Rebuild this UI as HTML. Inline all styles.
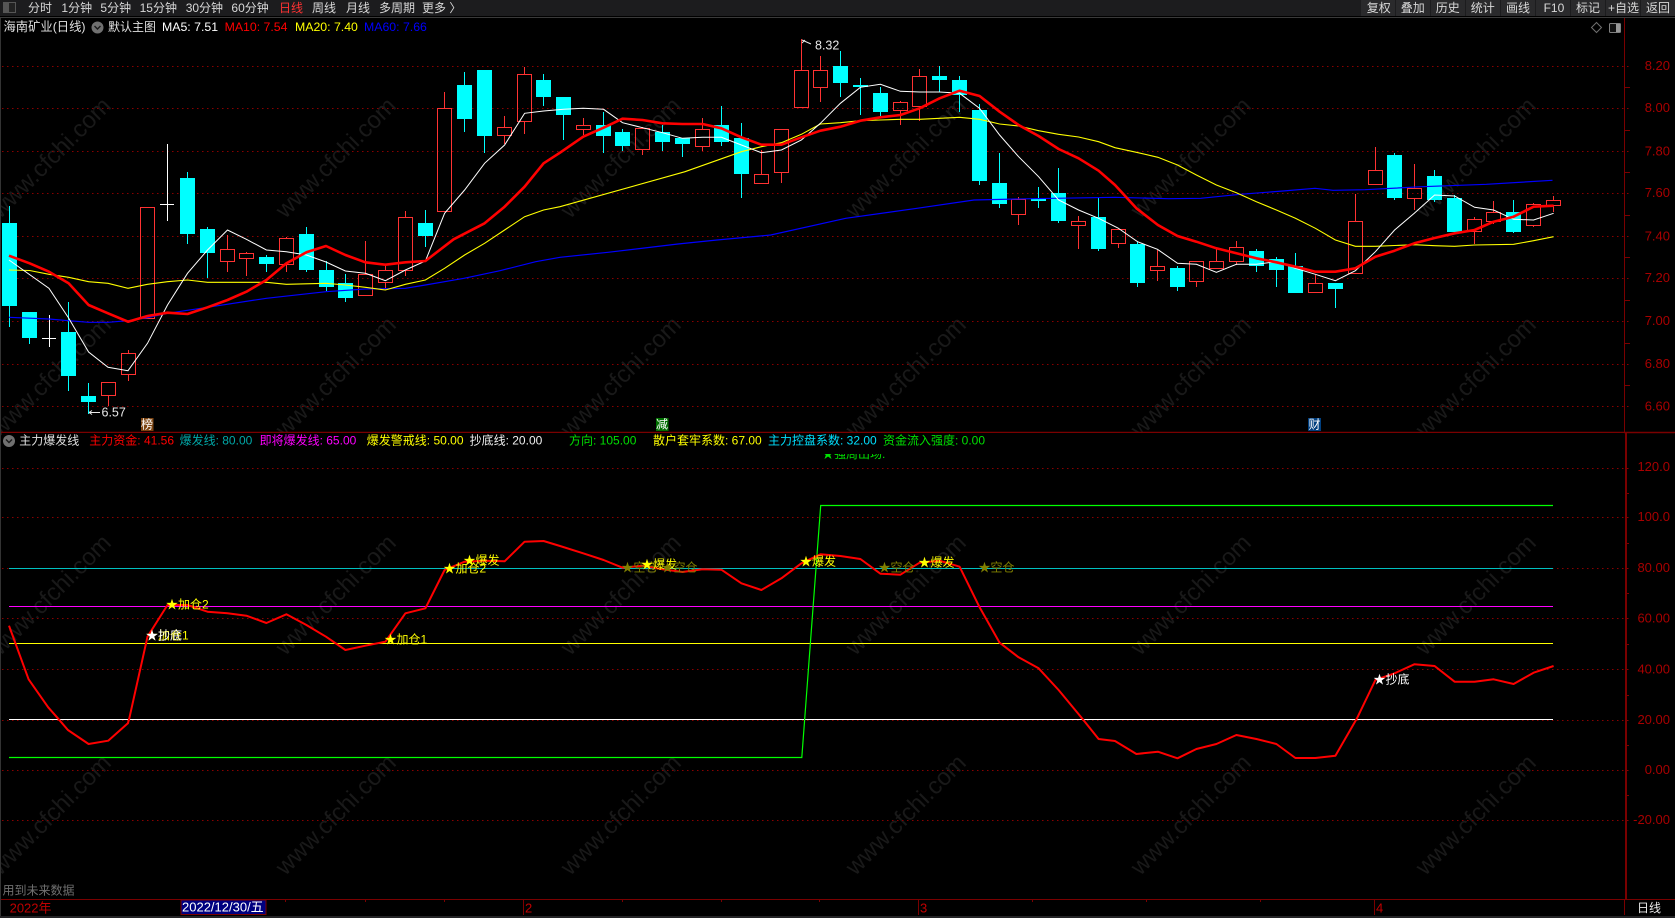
<!DOCTYPE html>
<html><head><meta charset="utf-8"><style>
html,body{margin:0;padding:0;background:#000;width:1675px;height:918px;overflow:hidden}
svg{display:block;position:absolute;left:0;top:0}
text{font-family:"Liberation Sans","Noto Sans CJK SC",sans-serif;font-size:12px;dominant-baseline:central}
.ax{fill:#a80000;text-anchor:end;font-size:13px}
.m{font-size:12px}
.y{fill:#ff0}.o{fill:#808000}.w{fill:#fff}
.b{fill:#d8d8d8;font-size:12px}
.wm{font-size:24px}
</style></head><body>
<svg width="1675" height="918" viewBox="0 0 1675 918" xmlns="http://www.w3.org/2000/svg">
<rect width="1675" height="918" fill="#000"/>
<!-- watermark -->
<g fill="#191919" text-anchor="middle">
<text class="wm" transform="translate(51,158) rotate(-45)">www.cfchi.com</text><text class="wm" transform="translate(336,158) rotate(-45)">www.cfchi.com</text><text class="wm" transform="translate(621,158) rotate(-45)">www.cfchi.com</text><text class="wm" transform="translate(906,158) rotate(-45)">www.cfchi.com</text><text class="wm" transform="translate(1191,158) rotate(-45)">www.cfchi.com</text><text class="wm" transform="translate(1476,158) rotate(-45)">www.cfchi.com</text>
<text class="wm" transform="translate(51,377) rotate(-45)">www.cfchi.com</text><text class="wm" transform="translate(336,377) rotate(-45)">www.cfchi.com</text><text class="wm" transform="translate(621,377) rotate(-45)">www.cfchi.com</text><text class="wm" transform="translate(906,377) rotate(-45)">www.cfchi.com</text><text class="wm" transform="translate(1191,377) rotate(-45)">www.cfchi.com</text><text class="wm" transform="translate(1476,377) rotate(-45)">www.cfchi.com</text>
<text class="wm" transform="translate(51,595) rotate(-45)">www.cfchi.com</text><text class="wm" transform="translate(336,595) rotate(-45)">www.cfchi.com</text><text class="wm" transform="translate(621,595) rotate(-45)">www.cfchi.com</text><text class="wm" transform="translate(906,595) rotate(-45)">www.cfchi.com</text><text class="wm" transform="translate(1191,595) rotate(-45)">www.cfchi.com</text><text class="wm" transform="translate(1476,595) rotate(-45)">www.cfchi.com</text>
<text class="wm" transform="translate(51,815) rotate(-45)">www.cfchi.com</text><text class="wm" transform="translate(336,815) rotate(-45)">www.cfchi.com</text><text class="wm" transform="translate(621,815) rotate(-45)">www.cfchi.com</text><text class="wm" transform="translate(906,815) rotate(-45)">www.cfchi.com</text><text class="wm" transform="translate(1191,815) rotate(-45)">www.cfchi.com</text><text class="wm" transform="translate(1476,815) rotate(-45)">www.cfchi.com</text>
</g>
<!-- grid -->
<path d="M2 66.5H1630M2 108.5H1630M2 151.5H1630M2 193.5H1630M2 236.5H1630M2 278.5H1630M2 321.5H1630M2 364.5H1630M2 406.5H1630M2 468.5H1630M2 517.5H1630M2 568.5H1630M2 618.5H1630M2 669.5H1630M2 720.5H1630M2 770.5H1630M2 820.5H1630" stroke="#8a0000" stroke-width="1" stroke-dasharray="1.5 3.5" fill="none" shape-rendering="crispEdges"/>
<!-- axis -->
<path d="M1624.5 18V432M1625 87.5h5M1625 130.5h5M1625 172.5h5M1625 215.5h5M1625 257.5h5M1625 300.5h5M1625 343.5h5M1625 385.5h5M1625 493.5h4M1625 543.5h4M1625 593.5h4M1625 644.5h4M1625 695.5h4M1625 745.5h4M1625 795.5h4" stroke="#7a0000" fill="none" shape-rendering="crispEdges"/>
<path d="M1626 432V899" stroke="#7a0000" stroke-width="2" fill="none" shape-rendering="crispEdges"/>
<path d="M0 432.5H1675" stroke="#7a0000" stroke-width="1.5" fill="none"/>
<path d="M0 899.5H1675" stroke="#7a0000" fill="none" shape-rendering="crispEdges"/>
<path d="M1624.5 899V915M523.5 899V915M918.5 899V915M1374.5 899V915M285.5 899v3M365.5 899v3M444.5 899v3M622.5 899v3M721.5 899v3M819.5 899v3M1032.5 899v3M1146.5 899v3M1260.5 899v3" stroke="#7a0000" fill="none" shape-rendering="crispEdges"/>
<!-- cyan wicks -->
<path shape-rendering="crispEdges" fill="none" stroke="#0ff" d="M9.5 206V327M29.5 312V344M68.5 302V391M88.5 383V414M187.5 172V244M207.5 227V278M266.5 255V272M306.5 227V272M326.5 261V291M345.5 274V302M425.5 210V247M464.5 72V132M484.5 70V153M543.5 74V106M563.5 97V140M603.5 112V153M622.5 129V151M662.5 125V151M682.5 138V157M721.5 106V146M741.5 123V198M840.5 51V97M860.5 78V115M880.5 87V116M939.5 66V92M959.5 76V112M979.5 104V185M999.5 153V208M1038.5 187V208M1058.5 168V223M1098.5 198V251M1137.5 242V287M1177.5 266V291M1256.5 249V272M1276.5 257V287M1295.5 253V293M1335.5 283V308M1394.5 153V200M1434.5 170V202M1454.5 195V233M1513.5 200V233"/>
<!-- cyan bodies -->
<path shape-rendering="crispEdges" fill="#0ff" d="M2 223h15v83h-15zM22 312h15v26h-15zM61 332h15v44h-15zM81 396h15v6h-15zM180 178h15v56h-15zM200 229h15v24h-15zM259 257h15v7h-15zM299 234h15v36h-15zM319 270h15v17h-15zM338 283h15v15h-15zM418 223h15v13h-15zM457 85h15v34h-15zM477 70h15v66h-15zM536 80h15v17h-15zM556 97h15v18h-15zM596 125h15v11h-15zM615 132h15v14h-15zM655 132h15v10h-15zM675 138h15v6h-15zM714 125h15v17h-15zM734 138h15v36h-15zM833 66h15v17h-15zM853 85h15v2h-15zM873 93h15v19h-15zM932 76h15v4h-15zM952 80h15v15h-15zM972 110h15v71h-15zM992 183h15v21h-15zM1031 199h15v2h-15zM1051 193h15v28h-15zM1091 217h15v32h-15zM1130 244h15v39h-15zM1170 268h15v19h-15zM1249 251h15v15h-15zM1269 259h15v11h-15zM1288 266h15v27h-15zM1328 283h15v6h-15zM1387 155h15v43h-15zM1427 176h15v24h-15zM1447 198h15v34h-15zM1506 212h15v20h-15z"/>
<!-- red candles -->
<path shape-rendering="crispEdges" fill="none" stroke="#ff3232" d="M101.5 382.5h14v13h-14zM108.5 396V406M121.5 353.5h14v21h-14zM128.5 350V353M128.5 375V381M140.5 207.5h14v111h-14zM220.5 249.5h14v12h-14zM227.5 235V249M227.5 262V272M239.5 253.5h14v5h-14zM246.5 252V253M246.5 259V276M279.5 238.5h14v26h-14zM286.5 237V238M286.5 265V272M358.5 274.5h14v21h-14zM365.5 241V274M378.5 270.5h14v12h-14zM385.5 265V270M385.5 283V290M398.5 217.5h14v53h-14zM405.5 211V217M405.5 271V276M437.5 108.5h14v103h-14zM444.5 92V108M497.5 127.5h14v8h-14zM504.5 116V127M504.5 136V144M517.5 74.5h14v47h-14zM524.5 67V74M524.5 122V134M576.5 125.5h14v4h-14zM583.5 118V125M583.5 130V135M635.5 128.5h14v21h-14zM642.5 127V128M642.5 150V155M695.5 129.5h14v17h-14zM702.5 118V129M702.5 147V151M754.5 174.5h14v9h-14zM761.5 150V174M774.5 129.5h14v43h-14zM781.5 173V183M794.5 70.5h14v37h-14zM801.5 39V70M813.5 70.5h14v17h-14zM820.5 56V70M820.5 88V102M893.5 102.5h14v8h-14zM900.5 101V102M900.5 111V125M912.5 76.5h14v30h-14zM919.5 69V76M919.5 107V121M1011.5 199.5h14v15h-14zM1018.5 197V199M1018.5 215V225M1071.5 221.5h14v4h-14zM1078.5 216V221M1078.5 226V249M1111.5 229.5h14v14h-14zM1118.5 244V248M1150.5 266.5h14v4h-14zM1157.5 250V266M1157.5 271V281M1189.5 261.5h14v20h-14zM1196.5 282V287M1209.5 261.5h14v7h-14zM1216.5 249V261M1229.5 247.5h14v14h-14zM1236.5 241V247M1236.5 262V265M1308.5 283.5h14v9h-14zM1315.5 275V283M1348.5 221.5h14v52h-14zM1355.5 194V221M1368.5 170.5h14v14h-14zM1375.5 147V170M1407.5 188.5h14v10h-14zM1414.5 164V188M1414.5 199V210M1467.5 219.5h14v12h-14zM1474.5 217V219M1474.5 232V244M1486.5 212.5h14v9h-14zM1493.5 201V212M1493.5 222V224M1526.5 204.5h14v21h-14zM1533.5 203V204M1533.5 226V227M1546.5 200.5h14v5h-14zM1553.5 196V200M1553.5 206V212"/>
<!-- white dojis -->
<path shape-rendering="crispEdges" fill="none" stroke="#fff" d="M49.5 315V347M42 338.5H56M167.5 144V221M160 204.5H174"/>
<!-- MA60 -->
<polyline fill="none" stroke="#0000ff" stroke-width="1.2" points="9,317.3 49,319 68.6,320.7 88.6,322.3 108,322.3 128,320.7 147.5,317.7 167.5,313.3 207.5,307.3 266.4,298.3 326,291.7 365.4,289 405.4,288.3 425.4,285 464,278.3 500,270.7 535.7,261.7 560,257.3 608,252.3 678,244 717,240 770.7,235 845.7,218.3 917,208.3 974,200 1031.4,198.7 1115,197.3 1168.6,198.7 1200.7,198.3 1240,194.3 1283,191 1315,188.3 1333,190.3 1365,189.7 1422,186.7 1486.4,184.3 1552.5,180.3"/>
<!-- MA20 -->
<polyline fill="none" stroke="#ffff00" stroke-width="1.1" points="9,270 29.6,270.5 49,274.3 68.6,277.3 88.6,281.7 108,283.3 128,288.3 147.5,284.3 167.5,281.7 187.5,280 207.5,282.3 266.4,282.3 286.4,284.3 326,283.3 345.4,285 365.4,287.3 385.4,290 405.4,284.3 425.4,280 444.6,268.3 464.6,255 484.6,243.3 504.6,230 524.6,216.7 543.6,210 560,206.7 685,171.7 741.4,151.7 761.4,146.7 781.4,142.7 801.4,134.3 820.4,124 840.4,122.7 860.4,120.7 880.4,120 900.4,119.3 919.6,119.3 939.6,118.3 959.6,117.3 979.6,119.3 999.6,124 1018.6,126 1038.6,130.7 1058.6,134.3 1078.6,137 1098.6,141.7 1115,147.7 1136.4,152.3 1157.9,157.3 1177.5,165 1196.4,175 1216.4,185 1236.4,192.7 1256.4,201.7 1276.4,210 1295.4,218.3 1315.4,228.3 1335.4,240 1355.4,246.3 1375.4,246.3 1414.3,244.7 1434.6,245.7 1454.6,246.3 1474.6,245 1513.6,244.3 1533.6,240.7 1553.6,236.7"/>
<!-- MA5 -->
<polyline fill="none" stroke="#ffffff" stroke-width="1" points="9,260 49,288.3 68.6,318 88.6,352 108,367.3 128,370.7 147.5,343.3 167.5,305 187.5,273.3 207.5,250 227.5,230 246.4,239.3 266.4,250 286.4,251.7 306.4,255 326,262 345.4,271 365.4,273.3 385.4,280.7 405.4,270 425.4,261 444.6,213.3 464.6,190 484.6,163.3 504.6,145 524.6,113.3 543.6,111 563.6,109.3 583.2,108.3 603.6,109.3 622.5,122.7 642.5,127.7 662.5,132.7 682.5,138.3 702.5,137.3 721.4,137.3 741.4,145 761.4,152.7 781.4,150 801.4,140 820.4,123.3 840.4,103.3 860.4,87.3 880.4,84.3 900.4,91.3 919.6,92 939.6,92 959.6,93.3 979.6,108.3 999.6,135 1018.6,156.7 1038.6,176.7 1058.6,200 1078.6,210 1098.6,218.3 1118,228 1137.5,241.7 1157.5,249.3 1177.5,263.3 1196.4,264.3 1216.4,272.3 1236.4,264.3 1256.4,264.3 1276.4,261.7 1295.4,268.3 1315.4,274.3 1335.4,280.7 1355.4,270.7 1375.4,251.7 1394.6,230 1414.3,213.3 1434.6,195 1454.6,196 1474.6,207.3 1493.6,210 1513.6,219.3 1533.6,220 1553.6,213.3"/>
<!-- MA10 -->
<polyline fill="none" stroke="#ff0000" stroke-width="2.6" stroke-linejoin="round" points="9,255.7 29.6,263.3 49,271.7 68.6,283.3 88.6,305 108,313.3 128,321.7 147.5,316 167.5,312.7 187.5,314 207.5,307.3 227.5,300 246.4,291.7 266.4,280 286.4,263.3 306.4,252.3 326,246 345.4,255 365.4,262.3 385.4,264.7 405.4,262.3 425.4,261 453.6,239.3 484.6,223.3 504.6,206.7 524.6,186.7 543.6,163.3 560,152.7 583.2,136.7 603.6,127.7 622.5,118.7 642.5,120 662.5,123.3 682.5,124 702.5,124 721.4,128.3 741.4,137.3 761.4,144.7 781.4,144.7 801.4,137.3 820.4,130.7 840.4,126.7 860.4,120.7 880.4,117.3 900.4,115 919.6,108.3 939.6,98.3 959.6,90.7 979.6,96 999.6,111.7 1018.6,125 1038.6,136 1058.6,149 1078.6,158.3 1098.6,170.7 1115,185 1136.4,208.3 1157.9,225 1177.5,236 1196.4,241.7 1216.4,248.3 1236.4,253.3 1256.4,258.3 1276.4,262.3 1295.4,266.7 1315.4,271.7 1335.4,271.7 1355.4,268.3 1375.4,256.7 1394.6,250.7 1414.3,243.3 1434.6,238 1454.6,233.3 1474.6,230 1493.6,221.7 1513.6,216.7 1533.6,206.7 1553.6,205.7"/>
<!-- annotations -->
<path d="M802 43l3-3M802 40l9 4M89 412.5h11M89 412.5l3-2M89 412.5l3 2" stroke="#e8e8e8" fill="none"/>
<text x="815" y="45.7" fill="#e8e8e8" style="font-size:12.5px">8.32</text>
<text x="101.5" y="412.7" fill="#e8e8e8" style="font-size:12.5px">6.57</text>
<!-- event badges -->
<rect x="141" y="418" width="12.5" height="13" fill="#7b4310"/><text x="141" y="424.5" fill="#fff">榜</text>
<rect x="656" y="418" width="12.5" height="13" fill="#007000"/><text x="656" y="424.5" fill="#fff">减</text>
<rect x="1308" y="418" width="13" height="13" fill="#003f7f"/><text x="1308.5" y="424.5" fill="#fff">财</text>
<!-- lower panel lines -->
<g fill="none" shape-rendering="crispEdges">
<path d="M9 568.5H1553" stroke="#00c0c0"/>
<path d="M9 606.5H1553" stroke="#ff00ff"/>
<path d="M9 643.5H1553" stroke="#ffff00"/>
<path d="M9 719.5H1553" stroke="#ffffff"/>
</g>
<polyline fill="none" stroke="#00ff00" stroke-width="1.2" points="9,757.5 801.8,757.5 820.7,505.5 1553,505.5"/>
<polyline fill="none" stroke="#ff0000" stroke-width="2" stroke-linejoin="round" points="9,625.7 28.6,679.3 48.2,707.3 57.9,718.3 67.9,730 88.6,744 108.2,740.7 127.9,723.3 129.3,718.3 147.5,636.7 167.5,605 187.5,605 207.5,611.7 227.5,613.3 246.4,615.7 266.4,623 286.4,614.3 306.4,625 326,636.7 345.4,650 365.4,645.7 385.4,641.7 405.4,613.3 425.4,608.3 444.6,570 464.6,561.7 484.6,560.7 504.6,561.3 524.6,541.7 543.6,541 560,546 583.2,553.3 603.6,560 622.5,567.7 642.5,565.7 662.5,569.3 682.5,572 702.5,569.3 721.4,569.7 741.4,583.3 761.4,590 781.4,578.3 801.4,563.3 820.4,554.3 840.4,556 860.4,559 880.4,573.7 900.4,574.7 919.6,562.7 939.6,560.7 959.6,566.7 979.6,607.3 999.6,642.7 1018.6,657.3 1038.6,668.3 1058.6,690 1082,718.3 1098.6,739 1115,741 1136.4,754 1157.9,751.7 1177.5,758.3 1196.4,749 1216.4,744 1236.4,735 1256.4,739 1276.4,744 1295.4,758 1315.4,758 1335.4,755.7 1357,718.3 1375.4,680 1394.6,673.3 1414.3,664.3 1434.6,666 1454.6,681.7 1474.6,681.7 1493.6,679.3 1513.6,684 1533.6,672.7 1553.6,666"/>
<!-- markers -->
<g class="m">
<text class="m y" x="146" y="635.7">★加仓1</text>
<text class="m w" x="146" y="635.7">★抄底</text>
<text class="m y" x="166" y="604.7">★加仓2</text>
<text class="m y" x="384.5" y="639.7">★加仓1</text>
<text class="m y" x="443.5" y="568.7">★加仓2</text>
<text class="m y" x="463.5" y="560.7">★爆发</text>
<text class="m o" x="621.5" y="567.7">★空仓</text>
<text class="m y" x="641" y="564.3">★爆发</text>
<text class="m o" x="661.5" y="567.7">★空仓</text>
<text class="m y" x="800" y="561.7">★爆发</text>
<text class="m o" x="878.5" y="567.7">★空仓</text>
<text class="m y" x="918.5" y="562.7">★爆发</text>
<text class="m o" x="978.5" y="567.7">★空仓</text>
<text class="m w" x="1373.5" y="679.7">★抄底</text>
</g>
<!-- axis labels -->
<text class="ax" x="1670" y="65.5">8.20</text><text class="ax" x="1670" y="107.5">8.00</text><text class="ax" x="1670" y="151">7.80</text><text class="ax" x="1670" y="192.5">7.60</text><text class="ax" x="1670" y="236">7.40</text><text class="ax" x="1670" y="277.5">7.20</text><text class="ax" x="1670" y="320.5">7.00</text><text class="ax" x="1670" y="363.5">6.80</text><text class="ax" x="1670" y="406">6.60</text>
<text class="ax" x="1670" y="466.5">120.0</text><text class="ax" x="1670" y="516.5">100.0</text><text class="ax" x="1670" y="567.5">80.00</text><text class="ax" x="1670" y="618">60.00</text><text class="ax" x="1670" y="669">40.00</text><text class="ax" x="1670" y="719.5">20.00</text><text class="ax" x="1670" y="769.5">0.00</text><text class="ax" x="1670" y="819.5">-20.00</text>
<!-- top bar -->
<rect width="1675" height="16" fill="#1c1c1e"/>
<rect y="16" width="1675" height="1" fill="#000"/>
<rect y="17" width="1675" height="1" fill="#3a3a3a"/>
<rect x="0" y="18" width="1" height="900" fill="#333"/>
<g transform="translate(1361,0)" fill="#2a2a2c">
<rect width="34" height="16"/><rect x="35" width="34" height="16"/><rect x="70" width="34" height="16"/><rect x="105" width="34" height="16"/><rect x="140" width="34" height="16"/><rect x="175" width="34" height="16"/><rect x="210" width="34" height="16"/><rect x="245" width="34" height="16"/><rect x="280" width="34" height="16"/>
</g>
<rect x="3" y="2" width="13" height="11" fill="#555"/><rect x="9" y="3" width="6" height="9" fill="#222"/>
<g fill="#d8d8d8">
<text class="b" x="28" y="8">分时</text><text class="b" x="61.4" y="8">1分钟</text><text class="b" x="100.4" y="8">5分钟</text><text class="b" x="139.6" y="8">15分钟</text><text class="b" x="185.7" y="8">30分钟</text><text class="b" x="231.4" y="8">60分钟</text>
<text x="279" y="8" style="fill:#ff3232">日线</text><text class="b" x="312" y="8">周线</text><text class="b" x="346" y="8">月线</text><text class="b" x="379" y="8">多周期</text><text class="b" x="422" y="8">更多 〉</text>
<text class="b" x="1366.8" y="8">复权</text><text class="b" x="1400.7" y="8">叠加</text><text class="b" x="1435.7" y="8">历史</text><text class="b" x="1470.7" y="8">统计</text><text class="b" x="1506" y="8">画线</text><text class="b" x="1543.6" y="8">F10</text><text class="b" x="1576" y="8">标记</text><text class="b" x="1608" y="8">+自选</text><text class="b" x="1646" y="8">返回</text>
</g>
<!-- header row -->
<text x="3.5" y="27" fill="#e0e0e0" style="font-size:12.3px">海南矿业(日线)</text>
<circle cx="97.5" cy="27.5" r="6" fill="#707070"/><path d="M94.5 26l3 3 3-3" stroke="#1a1a1a" stroke-width="1.4" fill="none"/>
<text x="108" y="27" fill="#e0e0e0">默认主图</text>
<text x="162" y="27" fill="#fff" style="font-size:12.3px">MA5: 7.51</text>
<text x="224.6" y="27" fill="#f00" style="font-size:12.3px">MA10: 7.54</text>
<text x="295" y="27" fill="#ff0" style="font-size:12.3px">MA20: 7.40</text>
<text x="364" y="27" fill="#00f" style="font-size:12.3px">MA60: 7.66</text>
<path d="M1596.5 22.5l5 5-5 5-5-5z" fill="none" stroke="#707070"/>
<rect x="1609.5" y="23.5" width="11" height="9" rx="1" fill="#111" stroke="#808080"/><rect x="1616" y="24" width="4" height="8" fill="#999"/>
<!-- lower header -->
<rect x="2" y="433" width="1622" height="15" fill="#000"/>
<circle cx="9" cy="441" r="6" fill="#707070"/><path d="M6 439.5l3 3 3-3" stroke="#1a1a1a" stroke-width="1.4" fill="none"/>
<text x="19.3" y="440.7" fill="#e0e0e0">主力爆发线</text>
<text x="89.3" y="440.7" fill="#f00">主力资金: 41.56</text>
<text x="179.6" y="440.7" fill="#00a8a8">爆发线: 80.00</text>
<text x="259.6" y="440.7" fill="#f0f">即将爆发线: 65.00</text>
<text x="366.8" y="440.7" fill="#ff0">爆发警戒线: 50.00</text>
<text x="469.6" y="440.7" fill="#f0f0f0">抄底线: 20.00</text>
<text x="569" y="440.7" fill="#00e000">方向: 105.00</text>
<text x="653" y="440.7" fill="#ff0">散户套牢系数: 67.00</text>
<text x="768" y="440.7" fill="#00e0ff">主力控盘系数: 32.00</text>
<text x="883" y="440.7" fill="#00e000">资金流入强度: 0.00</text>
<svg x="820" y="454" width="66" height="7" viewBox="820 454 66 7"><text x="822" y="454" fill="#00e000">★强周出场:</text></svg>
<!-- bottom -->
<text x="2.5" y="890.7" fill="#707070">用到未来数据</text>
<text x="9.6" y="908" fill="#c00000" style="font-size:13px">2022年</text>
<rect x="181" y="900" width="85" height="14.5" fill="#000080" stroke="#7a0000" stroke-width="1"/>
<text x="182" y="907" fill="#fff" style="font-size:13px">2022/12/30/五</text>
<text x="525" y="908" fill="#c00000" style="font-size:13px">2</text>
<text x="920" y="908" fill="#c00000" style="font-size:13px">3</text>
<text x="1376" y="908" fill="#c00000" style="font-size:13px">4</text>
<text x="1637" y="908" fill="#e8e8e8">日线</text>
<rect y="916" width="1675" height="2" fill="#242426"/>
</svg>
</body></html>
